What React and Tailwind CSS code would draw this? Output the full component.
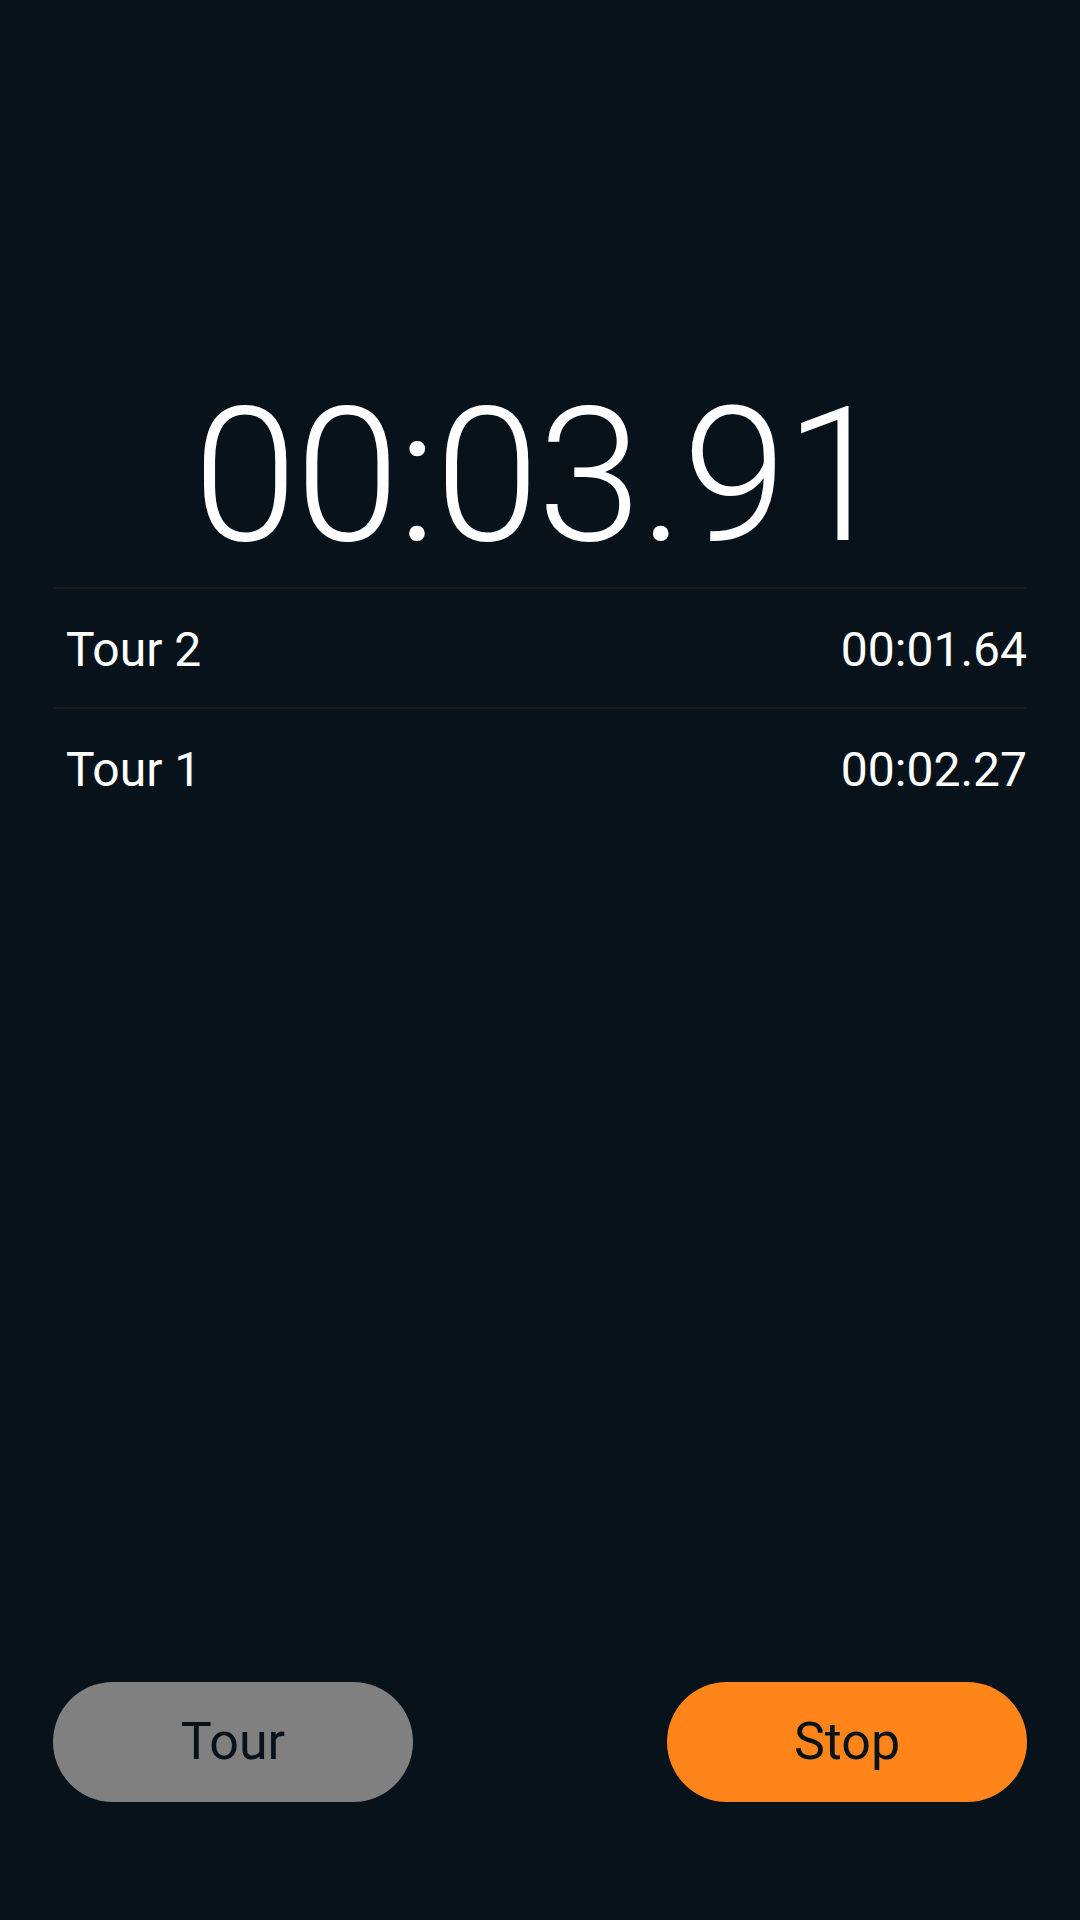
import React from 'react';

const LAPS = [
    { label: 'Tour 2', time: '00:01.64' },
    { label: 'Tour 1', time: '00:02.27' },
];

const App = () => {
    return (
        <div
            className="w-[1080px] h-[1920px] bg-[#08121b] text-white flex flex-col"
            style={{ fontFamily: 'Roboto, "Noto Sans", sans-serif' }}
        >
            {/* Elapsed time */}
            <div className="pt-[382px] text-center text-[188px] leading-none font-light tracking-[-2px]">00:03.91</div>

            {/* Laps */}
            <div className="mt-[17px] mx-[53px]">
                {LAPS.map((lap) => (
                    <div
                        key={lap.label}
                        className="flex justify-between items-center border-t-2 border-[#1c1a19] pt-[37px] pb-[33px] text-[48px] leading-[48px]"
                    >
                        <span className="pl-[13px]">{lap.label}</span>
                        <span>{lap.time}</span>
                    </div>
                ))}
            </div>

            {/* Actions */}
            <div className="mt-auto mb-[118px] px-[53px] flex justify-between">
                <button className="w-[360px] h-[120px] rounded-full bg-[#808080] text-[#08121b] text-[52px]">Tour</button>
                <button className="w-[360px] h-[120px] rounded-full bg-[#ff851a] text-[#08121b] text-[52px]">Stop</button>
            </div>
        </div>
    );
};

export default App;
